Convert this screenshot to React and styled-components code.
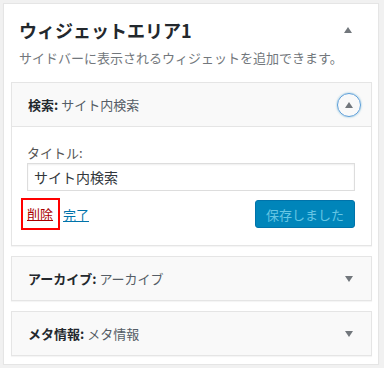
import React from "react";
import styled, { createGlobalStyle } from "styled-components";

const Global = createGlobalStyle`
  body {
    margin: 0;
    background: #f1f1f1;
    font-family: "Noto Sans CJK JP", "Noto Sans", sans-serif;
    color: #23282d;
  }
`;

const Panel = styled.div`
  margin: 3px 3px 0 3px;
  width: 376px;
  background: #fff;
  border: 1px solid #e5e5e5;
  box-shadow: 0 1px 1px rgba(0, 0, 0, 0.04);
  padding: 0 6px 8px 7px;
  box-sizing: border-box;
`;

const AreaHead = styled.div`
  display: flex;
  align-items: center;
  justify-content: space-between;
  padding: 13px 20px 0 8px;
  height: 38px;
  box-sizing: border-box;
`;

const AreaTitle = styled.h2`
  margin: 0;
  font-size: 18px;
  font-weight: 700;
  color: #23282d;
`;

const Arrow = styled.span`
  width: 0;
  height: 0;
  border-left: 4px solid transparent;
  border-right: 4px solid transparent;
  ${(p) =>
    p.$up
      ? "border-bottom: 6px solid #72777c;"
      : "border-top: 6px solid #72777c;"}
`;

const Desc = styled.p`
  margin: 6px 0 14px 8px;
  font-size: 13px;
  color: #72777c;
  line-height: 20px;
`;

const List = styled.div`
  display: flex;
  flex-direction: column;
  gap: 10px;
`;

const Widget = styled.div`
  border: 1px solid #e5e5e5;
  background: #fff;
  box-shadow: 0 1px 1px rgba(0, 0, 0, 0.04);
`;

const WidgetTop = styled.div`
  display: flex;
  align-items: center;
  justify-content: space-between;
  height: 43px;
  padding: 0 10px 0 16px;
  background: #f9f9f9;
  font-size: 13px;
  color: #23282d;
  ${(p) => p.$open && "border-bottom: 1px solid #e5e5e5;"}
`;

const WidgetName = styled.span`
  font-weight: 600;
`;

const WidgetSub = styled.span`
  font-weight: 400;
  color: #555d66;
`;

const Toggle = styled.span`
  display: flex;
  align-items: center;
  justify-content: center;
  width: 22px;
  height: 22px;
  border: 1px solid #5b9dd9;
  border-radius: 50%;
  box-shadow: 0 0 2px rgba(30, 140, 190, 0.6);
  ${(p) => !p.$focus && "border-color: transparent; box-shadow: none;"}
`;

const WidgetBody = styled.div`
  padding: 18px 16px 15px 15px;
`;

const Label = styled.label`
  display: block;
  font-size: 13px;
  color: #555;
  line-height: 16px;
  margin-bottom: 2px;
`;

const Input = styled.input`
  display: block;
  width: 100%;
  box-sizing: border-box;
  height: 28px;
  border: 1px solid #ddd;
  box-shadow: inset 0 1px 2px rgba(0, 0, 0, 0.07);
  font-family: inherit;
  font-size: 14px;
  color: #32373c;
  padding: 0 6px;
  outline: none;
`;

const Actions = styled.div`
  display: flex;
  align-items: center;
  justify-content: space-between;
  margin-top: 7px;
  margin-left: -6px;
`;

const Links = styled.div`
  display: flex;
  align-items: center;
  gap: 3px;
  font-size: 13px;
`;

const Link = styled.a`
  color: ${(p) => (p.$danger ? "#a00" : "#0073aa")};
  text-decoration: underline;
  ${(p) =>
    p.$marked &&
    "border: 2px solid #f00; padding: 5px 5px 6px 4px; line-height: 17px;"}
`;

const SaveButton = styled.button`
  height: 28px;
  width: 100px;
  border: 1px solid #0073aa;
  border-radius: 3px;
  background: #0085ba;
  color: #66c6e4;
  font-family: inherit;
  font-size: 13px;
  padding: 0 10px;
`;

function WidgetRow({ name, sub }) {
  return (
    <Widget>
      <WidgetTop>
        <span>
          <WidgetName>{name}:</WidgetName> <WidgetSub>{sub}</WidgetSub>
        </span>
        <Toggle>
          <Arrow />
        </Toggle>
      </WidgetTop>
    </Widget>
  );
}

export default function App() {
  return (
    <>
      <Global />
      <Panel>
        <AreaHead>
          <AreaTitle>ウィジェットエリア1</AreaTitle>
          <Arrow $up />
        </AreaHead>
        <Desc>サイドバーに表示されるウィジェットを追加できます。</Desc>
        <List>
          <Widget>
            <WidgetTop $open>
              <span>
                <WidgetName>検索:</WidgetName> <WidgetSub>サイト内検索</WidgetSub>
              </span>
              <Toggle $focus>
                <Arrow $up />
              </Toggle>
            </WidgetTop>
            <WidgetBody>
              <Label>タイトル:</Label>
              <Input defaultValue="サイト内検索" />
              <Actions>
                <Links>
                  <Link $danger $marked>削除</Link>
                  <Link>完了</Link>
                </Links>
                <SaveButton disabled>保存しました</SaveButton>
              </Actions>
            </WidgetBody>
          </Widget>
          <WidgetRow name="アーカイブ" sub="アーカイブ" />
          <WidgetRow name="メタ情報" sub="メタ情報" />
        </List>
      </Panel>
    </>
  );
}
